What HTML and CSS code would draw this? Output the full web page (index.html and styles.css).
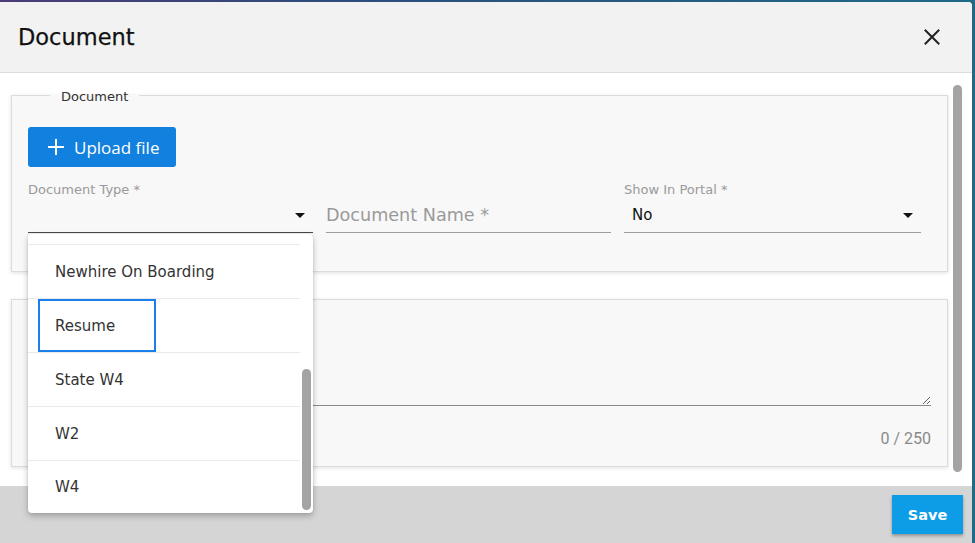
FILE: index.html
```html
<!DOCTYPE html>
<html lang="en">
<head>
<meta charset="utf-8">
<title>Document</title>
<link rel="stylesheet" href="styles.css">
</head>
<body>
<div class="modal">
  <header class="modal-head">
    <h1 class="modal-title">Document</h1>
    <button class="close" aria-label="Close">
      <svg width="16" height="16" viewBox="0 0 16 16"><path d="M1.5 1.5 L14.5 14.5 M14.5 1.5 L1.5 14.5" stroke="#222" stroke-width="2" fill="none" stroke-linecap="square"/></svg>
    </button>
  </header>

  <div class="modal-body">
    <fieldset class="group">
      <legend class="legend">Document</legend>
      <button class="upload">
        <svg width="18" height="18" viewBox="0 0 18 18"><path d="M9 1 V17 M1 9 H17" stroke="#fff" stroke-width="2" fill="none"/></svg>
        <span>Upload file</span>
      </button>
      <div class="fields">
        <div class="field">
          <div class="label">Document Type *</div>
          <div class="control control-active">
            <span class="value"></span>
            <span class="caret"></span>
          </div>
        </div>
        <div class="field">
          <div class="label"></div>
          <div class="control">
            <span class="placeholder">Document Name *</span>
          </div>
        </div>
        <div class="field">
          <div class="label">Show In Portal *</div>
          <div class="control">
            <span class="value">No</span>
            <span class="caret"></span>
          </div>
        </div>
      </div>
    </fieldset>

    <fieldset class="group group-notes">
      <textarea class="notes"></textarea>
      <div class="counter">0 / 250</div>
    </fieldset>
  </div>
  <div class="body-thumb"></div>

  <footer class="modal-foot">
    <button class="save">Save</button>
  </footer>

  <div class="menu">
    <div class="menu-scroll">
      <div class="menu-list">
        <div class="opt"></div>
        <div class="opt"><span class="opt-label">Newhire On Boarding</span></div>
        <div class="opt opt-focus"><span class="opt-label">Resume</span></div>
        <div class="opt"><span class="opt-label">State W4</span></div>
        <div class="opt"><span class="opt-label">W2</span></div>
        <div class="opt"><span class="opt-label">W4</span></div>
      </div>
    </div>
    <div class="menu-thumb"></div>
  </div>
</div>
</body>
</html>
```
FILE: styles.css
```css
html, body {
  margin: 0;
  padding: 0;
  height: 100%;
  overflow: hidden;
}

body {
  background: linear-gradient(90deg, #4a3a78 0%, #2b4f7e 40%, #1f6a86 100%);
  font-family: "DejaVu Sans", sans-serif;
}

.modal {
  position: relative;
  width: 972px;
  height: 541px;
  margin-top: 2px;
  background: #fff;
  border-top-right-radius: 4px;
  display: flex;
  flex-direction: column;
}

.modal-head {
  height: 70px;
  flex: 0 0 auto;
  background: #f2f2f2;
  border-bottom: 1px solid #dcdcdc;
  border-top-right-radius: 4px;
  display: flex;
  align-items: center;
  justify-content: space-between;
  padding: 0 32px 0 18px;
}

.modal-title {
  margin: 0;
  font-family: "DejaVu Sans", sans-serif;
  font-size: 22.5px;
  font-weight: normal;
  color: #111;
  -webkit-text-stroke: 0.25px #111;
}

.close {
  border: 0;
  background: none;
  padding: 0;
  width: 16px;
  height: 16px;
  display: flex;
}

.modal-body {
  flex: 1 1 auto;
  overflow: hidden;
  margin-right: 10px;
  padding: 12px 14px 22px 11px;
}

.body-thumb {
  position: absolute;
  left: 953px;
  top: 83px;
  width: 9px;
  height: 387px;
  border-radius: 5px;
  background: #a3a3a3;
}

.group {
  margin: 0;
  min-width: 0;
  border: 1px solid #dcdcdc;
  background: #f8f8f8;
  box-shadow: 0 1px 4px rgba(0, 0, 0, 0.12);
  padding: 22px 26px 38px 16px;
}

.legend {
  margin-left: 22px;
  padding: 4px 11px 0;
  font-size: 13px;
  line-height: 16px;
  color: #333;
}

.upload {
  display: inline-flex;
  align-items: center;
  gap: 9px;
  width: 148px;
  height: 40px;
  padding: 0 0 0 19px;
  border: 0;
  border-radius: 3px;
  background: #1180de;
  color: #fff;
  font-family: "Open Sans", sans-serif;
  font-size: 17px;
}

.fields {
  margin-top: 15px;
  display: grid;
  grid-template-columns: 285px 285px 297px;
  column-gap: 13px;
}

.field {
  display: flex;
  flex-direction: column;
}

.label {
  height: 16px;
  font-size: 13px;
  line-height: 16px;
  color: #9a9a9a;
}

.control {
  height: 34px;
  border-bottom: 1px solid #9c9c9c;
  display: flex;
  align-items: center;
  justify-content: space-between;
}

.control-active {
  border-bottom-color: #4a4a4a;
}

.value {
  font-size: 15px;
  color: #111;
  padding-left: 8px;
}

.placeholder {
  font-size: 17.6px;
  color: #9a9a9a;
}

.caret {
  width: 0;
  height: 0;
  border-left: 5px solid transparent;
  border-right: 5px solid transparent;
  border-top: 5px solid #111;
  margin-right: 8px;
}

.group-notes {
  margin-top: 27px;
  padding: 16px 16px 18px 16px;
}

.notes {
  display: block;
  width: 100%;
  box-sizing: border-box;
  height: 90px;
  border: 0;
  border-bottom: 1px solid #8a8a8a;
  background: transparent;
  resize: vertical;
  font-family: "Roboto", sans-serif;
  outline: none;
}

.counter {
  margin-top: 24px;
  text-align: right;
  font-family: "Roboto", sans-serif;
  font-size: 16px;
  line-height: 18px;
  color: #8a8a8a;
}

.modal-foot {
  height: 57px;
  flex: 0 0 auto;
  background: #d5d5d5;
  display: flex;
  align-items: center;
  justify-content: flex-end;
  padding-right: 9px;
}

.save {
  width: 71px;
  height: 39px;
  border: 0;
  background: #0d9ce6;
  color: #fff;
  font-family: "DejaVu Sans", sans-serif;
  font-weight: bold;
  font-size: 14.5px;
  box-shadow: 0 2px 3px rgba(0, 0, 0, 0.3);
}

.menu {
  position: absolute;
  top: 232px;
  left: 28px;
  width: 285px;
  height: 279px;
  background: #fff;
  border-radius: 4px;
  box-shadow: 0 3px 6px rgba(0, 0, 0, 0.25), 0 0 2px rgba(0, 0, 0, 0.12);
  overflow: hidden;
}

.menu-scroll {
  height: 100%;
  display: flex;
  flex-direction: column-reverse;
  overflow: hidden;
}

.menu-thumb {
  position: absolute;
  right: 2px;
  top: 135px;
  width: 9px;
  height: 141px;
  border-radius: 5px;
  background: #a3a3a3;
}

.menu-list {
  flex: 0 0 auto;
  margin-right: 13px;
}

.opt {
  height: 53px;
  border-bottom: 1px solid #e9e9e9;
  display: flex;
  align-items: stretch;
  padding-left: 27px;
  font-size: 15px;
  color: #333;
}

.opt:last-child {
  border-bottom: 0;
  height: 52px;
}

.opt-label {
  display: flex;
  align-items: center;
}

.opt-focus .opt-label {
  margin-left: -17px;
  padding-left: 15px;
  width: 118px;
  box-sizing: border-box;
  border: 2px solid #1a7fe8;
}
```
